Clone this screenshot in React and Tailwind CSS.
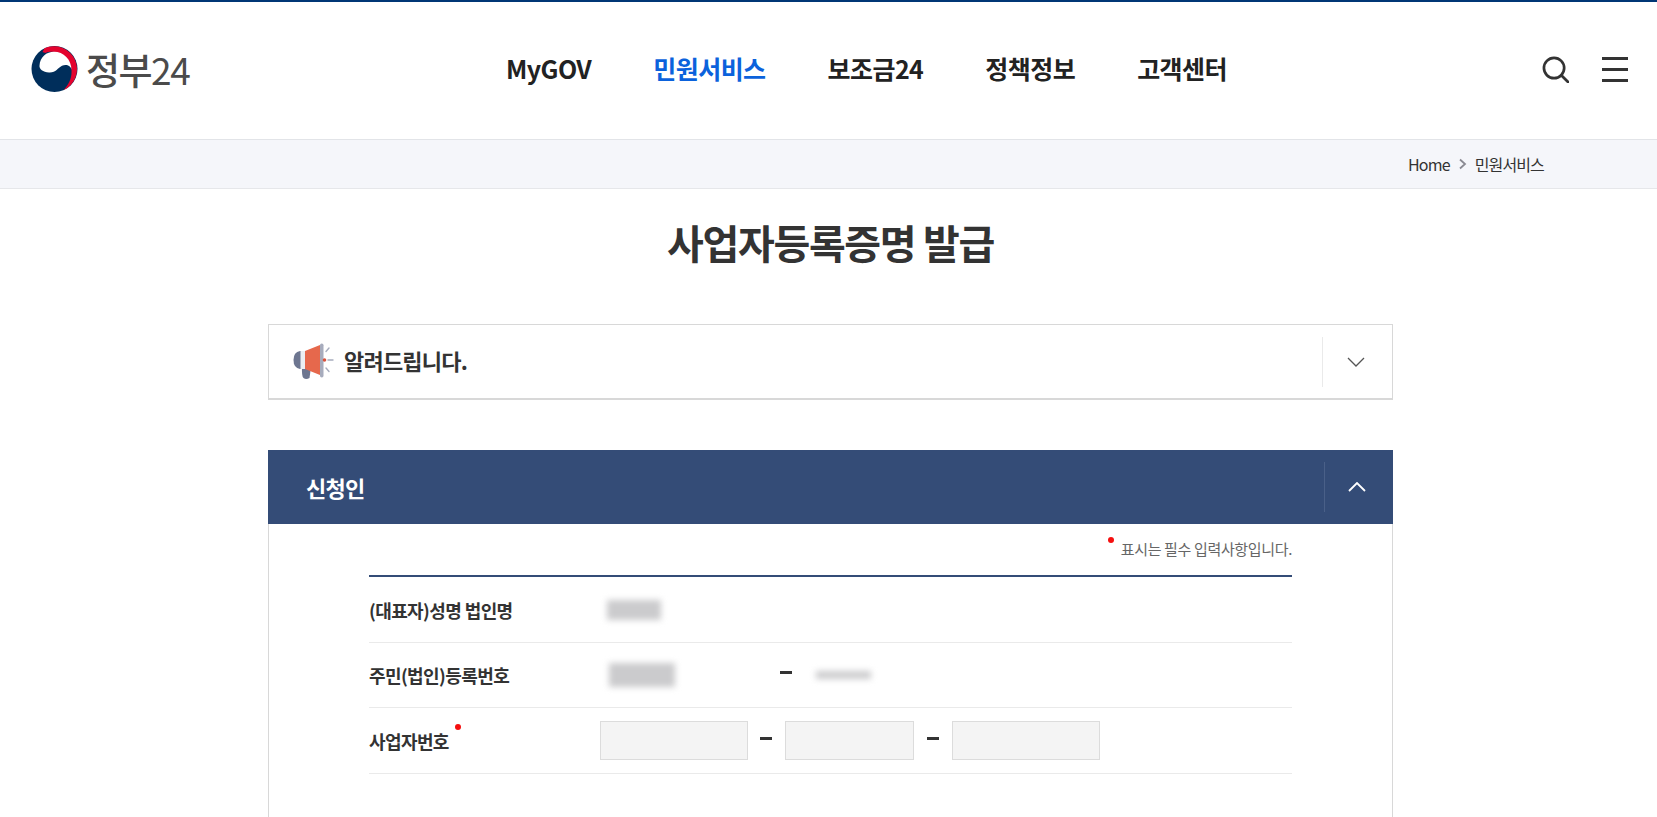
const KR = "font-['Noto_Sans_CJK_KR','Noto_Sans',sans-serif]";

function Logo() {
  return (
    <svg width="47" height="46" viewBox="0 0 46 46" className="shrink-0">
      <circle cx="23" cy="23" r="23" fill="#002e5b" />
      <path d="M13 2.3 A 23 23 0 0 1 32 44.2 C 38 38 40.5 31 40 24 C 39.5 13 30 5.5 20 5.8 C 18 5.8 16 6 14 7 L 11 6 Z" fill="#e4032e" />
      <path d="M8 19.5 C 8.5 11 15 5.8 22.5 5.8 C 32 5.8 40 13.5 40 24 C 39.5 19.5 34.5 18 30.5 19.8 C 26 22 24.5 27 17.5 26.6 C 11.5 26 7.5 23 8 19.5 Z" fill="#fff" />
    </svg>
  );
}

function Megaphone() {
  return (
    <svg width="42" height="38" viewBox="0 0 42 38" className="shrink-0">
      <path d="M9 24 L18 24 L16.5 35 Q13 37 10.5 35 Q8.5 33 9 24 Z" fill="#6d7690" />
      <path d="M7 8 L12 8 L12 26 L7 26 Q0.5 25 0.5 17 Q0.5 9 7 8 Z" fill="#6d7690" />
      <rect x="7.5" y="8" width="4.5" height="18" fill="#eceef2" />
      <path d="M12 8 L27 2 L27 32 L12 26 Z" fill="#e6684c" />
      <rect x="27" y="0.5" width="3.5" height="34" rx="1.7" fill="#a7acbd" />
      <circle cx="31.5" cy="17" r="1.8" fill="#d9523c" />
      <path d="M33 8.5 L36 5 M35 17 L40 17 M33 25 L36 28.5" stroke="#a7acbd" strokeWidth="1.4" strokeLinecap="round" />
    </svg>
  );
}

function Blur({ w, h, className = "" }) {
  return <div className={`bg-[#cbcbcd] blur-[3px] ${className}`} style={{ width: w, height: h }} />;
}

function Dash({ className = "" }) {
  return <span className={`block w-[12px] h-[3px] bg-[#333] ${className}`} />;
}

function Row({ label, required, children, height }) {
  return (
    <div className={`flex items-center border-b border-[#eaeaea] ${height}`}>
      <div className="w-[231px] shrink-0 relative text-[18px] font-bold tracking-[-0.6px] text-[#333] pt-[1px]">
        <span className="relative">
          {label}
          {required && <span className="absolute top-[-4px] -right-[12px] w-[6px] h-[6px] rounded-full bg-[#f50f0f]" />}
        </span>
      </div>
      {children}
    </div>
  );
}

export default function App() {
  return (
    <div className={`${KR} bg-white w-full h-[817px] overflow-hidden text-[#333]`}>
      <header className="h-[140px] border-t-[2px] border-b border-t-[#003675] border-b-[#e2e4e8] flex items-center pl-[31px] pr-[116px] relative">
        <div className="flex items-center w-[475px] shrink-0 -mt-[3px]">
          <Logo />
          <span className="ml-[8px] text-[37px] leading-none tracking-[-1.5px] font-medium text-[#4b4b4b]">정부<span className="font-normal">24</span></span>
        </div>
        <nav className="flex items-center gap-[62px] text-[25px] font-bold tracking-[-0.55px] text-[#222] -mt-[3px]">
          <a>MyGOV</a>
          <a className="text-[#0b62dc]">민원서비스</a>
          <a>보조금24</a>
          <a>정책정보</a>
          <a>고객센터</a>
        </nav>
        <div className="ml-auto flex items-center gap-[33px] -mt-[3px] -mr-[87px]">
          <svg width="27" height="27" viewBox="0 0 28 28" fill="none" stroke="#333" strokeWidth="2.8">
            <circle cx="12.5" cy="12.5" r="10.5" />
            <path d="M20 20 L27 27" strokeLinecap="round" />
          </svg>
          <div className="w-[26px] flex flex-col gap-[8px]">
            <span className="block h-[3px] bg-[#333]" />
            <span className="block h-[3px] bg-[#333]" />
            <span className="block h-[3px] bg-[#333]" />
          </div>
        </div>
      </header>

      <div className="h-[49px] bg-[#f5f6fa] border-b border-[#e6e7ea] flex items-center justify-end pr-[113px] text-[16px] tracking-[-0.85px] text-[#333]">
        <span>Home</span>
        <svg width="9" height="12" viewBox="0 0 9 12" fill="none" stroke="#8a8a92" strokeWidth="1.8" className="mx-[8px]">
          <path d="M2 1.5 L7 6 L2 10.5" />
        </svg>
        <span>민원서비스</span>
      </div>

      <h1 className="text-center text-[40px] leading-[54px] font-bold tracking-[-1.35px] text-[#333] mt-[26px] ml-[4px]">사업자등록증명 발급</h1>

      <main className="w-[1125px] ml-[268px] mt-[55px]">
        <div className="h-[76px] border border-b-2 border-[#d8d8d8] flex items-center pl-[24px] pr-0">
          <Megaphone />
          <span className="ml-[9px] -mt-[2px] text-[22px] font-bold tracking-[-0.8px] text-[#333]">알려드립니다.</span>
          <div className="ml-auto h-[50px] w-[70px] border-l border-[#eaeaea] flex items-center justify-center pr-[4px]">
            <svg width="18" height="10" viewBox="0 0 18 10" fill="none" stroke="#555" strokeWidth="1.3">
              <path d="M1 1 L9 9 L17 1" />
            </svg>
          </div>
        </div>

        <div className="mt-[50px] h-[74px] bg-[#344c77] flex items-center pl-[38px] text-white">
          <span className="text-[22px] font-bold tracking-[-0.8px]">신청인</span>
          <div className="ml-auto h-[50px] w-[70px] border-l border-[#4a6088] flex items-center justify-center -mr-[1px] pr-[6px]">
            <svg width="18" height="10" viewBox="0 0 18 10" fill="none" stroke="#fff" strokeWidth="1.8">
              <path d="M1 9 L9 1 L17 9" />
            </svg>
          </div>
        </div>

        <div className="h-[300px] border-x border-[#d8d8d8] px-[100px]">
          <div className="h-[53px] flex items-center justify-end text-[15px] tracking-[-0.35px] text-[#666] border-b-2 border-[#344c77]">
            <span className="w-[6px] h-[6px] rounded-full bg-[#f50f0f] mr-[7px] -mt-[20px]" />
            표시는 필수 입력사항입니다.
          </div>
          <Row label="(대표자)성명 법인명" height="h-[66px]">
            <Blur w={54} h={20} className="ml-[7px]" />
          </Row>
          <Row label="주민(법인)등록번호" height="h-[65px]">
            <Blur w={66} h={24} className="ml-[9px]" />
            <Dash className="ml-[105px] -mt-[6px]" />
            <Blur w={55} h={8} className="ml-[24px]" />
          </Row>
          <Row label="사업자번호" required height="h-[66px]">
            <input className="w-[148px] h-[39px] border border-[#dcdcdc] bg-[#f4f4f4]" />
            <Dash className="ml-[12px] -mt-[4px]" />
            <input className="ml-[13px] w-[129px] h-[39px] border border-[#dcdcdc] bg-[#f4f4f4]" />
            <Dash className="ml-[13px] -mt-[4px]" />
            <input className="ml-[13px] w-[148px] h-[39px] border border-[#dcdcdc] bg-[#f4f4f4]" />
          </Row>
        </div>
      </main>
    </div>
  );
}
